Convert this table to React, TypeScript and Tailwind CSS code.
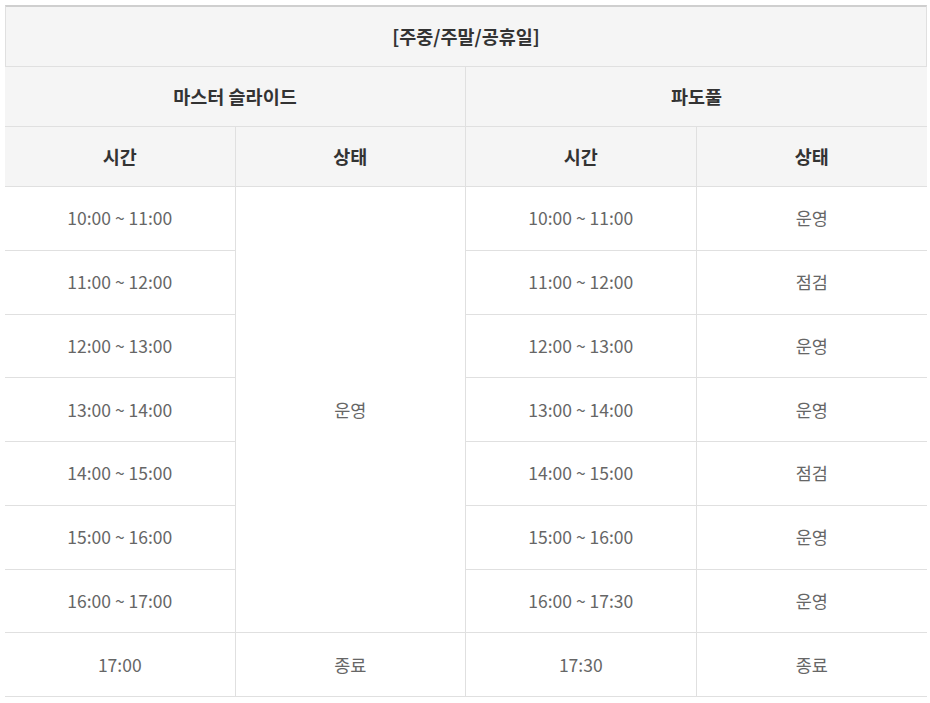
const leftTimes = [
  "10:00 ~ 11:00",
  "11:00 ~ 12:00",
  "12:00 ~ 13:00",
  "13:00 ~ 14:00",
  "14:00 ~ 15:00",
  "15:00 ~ 16:00",
  "16:00 ~ 17:00",
];

const rightRows = [
  ["10:00 ~ 11:00", "운영"],
  ["11:00 ~ 12:00", "점검"],
  ["12:00 ~ 13:00", "운영"],
  ["13:00 ~ 14:00", "운영"],
  ["14:00 ~ 15:00", "점검"],
  ["15:00 ~ 16:00", "운영"],
  ["16:00 ~ 17:30", "운영"],
];

const cell = "flex items-center justify-center border-b border-[#e0e0e0]";

export default function App() {
  return (
    <div
      className="min-h-screen bg-white pt-[5px] px-[5px]"
      style={{ fontFamily: '"Noto Sans CJK KR", "Noto Sans", sans-serif' }}
    >
      <div className="w-[922px]">
        {/* title */}
        <div className="h-[62px] flex items-center justify-center border-t-2 border-t-[#cfcfcf] border-x border-x-[#e0e0e0] border-b border-b-[#e0e0e0] bg-[#f5f5f5] text-[18.5px] font-bold text-[#333]">
          [주중/주말/공휴일]
        </div>

        <div className="grid grid-cols-4 bg-[#f5f5f5] text-[18.5px] font-bold text-[#333]">
          <div className={`${cell} col-span-2 h-[60px] border-r`}>마스터 슬라이드</div>
          <div className={`${cell} col-span-2 h-[60px]`}>파도풀</div>
          <div className={`${cell} h-[60px] border-r`}>시간</div>
          <div className={`${cell} h-[60px] border-r`}>상태</div>
          <div className={`${cell} h-[60px] border-r`}>시간</div>
          <div className={`${cell} h-[60px]`}>상태</div>
        </div>

        <div className="grid grid-cols-4 auto-rows-[63.75px] text-[17.5px] text-[#666]">
          {leftTimes.map((t, i) => (
            <div key={i} className="contents">
              <div className={`${cell} col-start-1 border-r`}>{t}</div>
              {i === 0 && (
                <div className={`${cell} col-start-2 row-span-7 border-r`}>운영</div>
              )}
              <div className={`${cell} col-start-3 border-r`}>{rightRows[i][0]}</div>
              <div className={`${cell} col-start-4`}>{rightRows[i][1]}</div>
            </div>
          ))}
          <div className={`${cell} border-r`}>17:00</div>
          <div className={`${cell} border-r`}>종료</div>
          <div className={`${cell} border-r`}>17:30</div>
          <div className={cell}>종료</div>
        </div>
      </div>
    </div>
  );
}
